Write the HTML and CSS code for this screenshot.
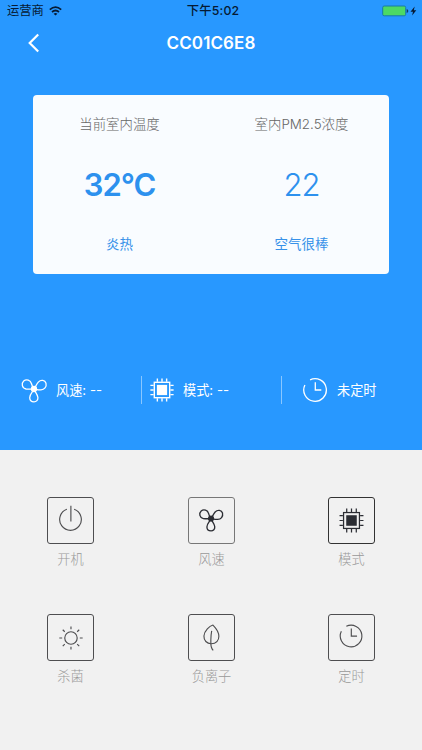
FILE: index.html
```
<!DOCTYPE html>
<html lang="zh-CN">
<head>
<meta charset="utf-8">
<title>CC01C6E8</title>
<link rel="stylesheet" href="styles.css">
</head>
<body>
<svg class="defs" width="0" height="0">
  <defs>
    <g id="fan" fill="none" stroke="currentColor">
      <path d="M0 0C-3 .3-5.500 .3-8 0C-12-.8-12.900-5.500-10.300-8C-7.500-10.200-3.500-8.800-2.600-5.500C-2-3.300-1.300-1.500 0 0Z"/>
      <path d="M0 0C1.500-1.800 2.200-4.500 4.300-6.900C7-9.600 11-8.900 12-5.800C12.900-2 10.200 .8 7 .9C4 1 2 .3 0 0Z"/>
      <path d="M0 0C-.8 2.500-4.300 5-4.300 8.800C-4.200 11.500-2.200 12.900 0 12.900C2.400 12.900 4.100 11 3.900 8.500C3.600 5 .8 2.800 0 0Z"/>
      <circle r="2.500" fill="currentColor"/>
    </g>
    <g id="chip" fill="none" stroke="currentColor">
      <rect x="-8.300" y="-8.300" width="16.600" height="16.600"/>
      <rect x="-5.500" y="-5.500" width="11" height="11" fill="currentColor" stroke="none"/>
      <path d="M-5-9V-12.500M0-9V-12.500M5-9V-12.500M-5 9V12.500M0 9V12.500M5 9V12.500M-9-5H-12.500M-9 0H-12.500M-9 5H-12.500M9-5H12.500M9 0H12.500M9 5H12.500"/>
    </g>
    <g id="clock" fill="none" stroke="currentColor">
      <path d="M-4.900-10.200A11.300 11.300 0 1 1-10.100-5"/>
      <path d="M.3-7.800V0H6.300"/>
    </g>
  </defs>
</svg>
<div class="screen">
  <section class="hero">
    <div class="status-bar">
      <div class="carrier">运营商
        <svg width="13" height="10" viewBox="0 0 13 10" fill="none" stroke="#061a33" stroke-width="1.700">
          <path d="M.8 3.600Q6.500-1.500 12.200 3.600M3 6Q6.500 3 10 6"/>
          <path d="M6.500 9.600L4.600 7.700Q6.500 6.300 8.400 7.700Z" fill="#061a33" stroke="none"/>
        </svg>
      </div>
      <div class="time">下午5:02</div>
      <svg class="battery" width="36" height="12" viewBox="0 0 36 12">
        <rect x=".7" y="1" width="23" height="9.800" rx="1.500" fill="#4cd964" stroke="#197aa5"/>
        <path d="M24.700 4v4q1.600-.4 1.600-2t-1.600-2Z" fill="#123a62"/>
        <path d="M32.700 1.500L28.500 6.700H31L30.100 10.600L34.300 5.300H31.800Z" fill="#061a33"/>
      </svg>
    </div>
    <div class="nav-bar">
      <svg class="back" width="12" height="20" viewBox="0 0 12 20" fill="none" stroke="#fff" stroke-width="2.200"><path d="M10.200 1.500L1.700 10L10.200 18.500"/></svg>
      <div class="title">CC01C6E8</div>
    </div>
    <div class="card">
      <div class="reading">
        <div class="reading-label">当前室内温度</div>
        <div class="reading-value strong">32°C</div>
        <div class="reading-note">炎热</div>
      </div>
      <div class="reading">
        <div class="reading-label">室内PM2.5浓度</div>
        <div class="reading-value">22</div>
        <div class="reading-note">空气很棒</div>
      </div>
    </div>
    <div class="states">
      <div class="state first">
        <svg width="28" height="28" viewBox="-14 -13 28 28" stroke-width="1.300"><use href="#fan"/></svg>
        <span>风速: --</span>
      </div>
      <div class="state second">
        <svg width="26" height="26" viewBox="-14 -14 28 28" stroke-width="1.500"><use href="#chip"/></svg>
        <span>模式: --</span>
      </div>
      <div class="state third">
        <svg width="26" height="26" viewBox="-13 -13 26 26" stroke-width="1.300"><use href="#clock"/></svg>
        <span>未定时</span>
      </div>
    </div>
  </section>
  <section class="controls">
    <div class="control">
      <svg viewBox="-23.500 -22.500 47 47" stroke-width="1.200"><g fill="none" stroke="currentColor"><path d="M-3.800-10.700A11.300 11.300 0 1 0 3.800-10.700M.4-14.500V2"/></g></svg>
      <span>开机</span>
    </div>
    <div class="control thin">
      <svg viewBox="-23 -21.500 47 47" stroke-width="1.400"><use href="#fan"/></svg>
      <span>风速</span>
    </div>
    <div class="control dark">
      <svg viewBox="-23.500 -23.500 47 47" stroke-width="1.300"><use href="#chip"/></svg>
      <span>模式</span>
    </div>
    <div class="control">
      <svg viewBox="-24 -24 47 47" stroke-width="1.200"><g fill="none" stroke="currentColor"><circle r="6.500"/><path d="M0-9.200V-12M0 9.200V12M-9.200 0H-12.200M9.200 0H12.200M-6.500-6.500L-8.600-8.600M6.500-6.500L8.600-8.600M-6.500 6.500L-8.600 8.600M6.500 6.500L8.600 8.600"/></g></svg>
      <span>杀菌</span>
    </div>
    <div class="control">
      <svg viewBox="-23.500 -23.500 47 47" stroke-width="1.200"><g fill="none" stroke="currentColor"><path d="M1.500-13C-2-12-7.500-7-7.900-1.500C-8.100 3-5 6.500-.3 6.500C5 6.500 7.700 3 7.700-1.200C7.700-5.500 4.500-10 1.500-13Z"/><path d="M.2-7C-.8-2-1.100 8 0 10.500Q.6 12.300 1.800 13.500"/></g></svg>
      <span>负离子</span>
    </div>
    <div class="control">
      <svg viewBox="-23 -22 47 47" stroke-width="1.200"><use href="#clock"/></svg>
      <span>定时</span>
    </div>
  </section>
</div>
</body>
</html>
```
FILE: styles.css
```
* { box-sizing: border-box; }
body {
  margin: 0;
  background: #f1f1f1;
  font-family: Inter, "Noto Sans CJK SC", sans-serif;
}
.defs { display: block; position: absolute; }
.screen { width: 422px; height: 750px; overflow: hidden; }
.hero { height: 450px; background: #2898ff; color: #fff; }
.status-bar {
  display: grid;
  grid-template-columns: 1fr auto 1fr;
  align-items: center;
  height: 22px;
  padding: 0 4px 0 7px;
  color: #061a33;
  font-size: 12.300px;
  line-height: 22px;
}
.carrier { display: flex; align-items: center; gap: 5px; }
.time { font-weight: 500; letter-spacing: .2px; padding-left: 1px; }
.battery { justify-self: end; }
.nav-bar {
  display: grid;
  grid-template-columns: 28px 1fr 28px;
  align-items: center;
  height: 42px;
  padding: 0 28px;
}
.title { text-align: center; font-size: 17px; font-weight: 600; letter-spacing: .1px; }
.card {
  display: grid;
  grid-template-columns: 173px 191px;
  width: 356px;
  height: 179px;
  margin: 30.500px 0 0 33px;
  border-radius: 4px;
  background: #f9fcff;
}
.reading { text-align: center; white-space: nowrap; }
.reading-label { margin-top: 19px; height: 20px; line-height: 20px; font-size: 13.400px; font-weight: 300; color: #666; }
.reading-value { margin-top: 30px; height: 42px; line-height: 42px; font-size: 31px; letter-spacing: -1px; color: #2d91ee; font-weight: 300; }
.strong { font-weight: 600; }
.reading-note { margin-top: 28px; height: 20px; line-height: 20px; font-size: 13.500px; color: #3792e9; }
.states {
  display: grid;
  grid-template-columns: 141px 140px 141px;
  height: 26px;
  margin-top: 102.500px;
  line-height: 26px;
  font-size: 13.200px;
}
.state { display: flex; align-items: center; border-left: 1px solid #8ac7ff; }
.state span { white-space: nowrap; }
.first { padding-left: 20px; gap: 8px; border-left: 0; }
.second { padding-left: 7px; gap: 8px; }
.third { padding-left: 20px; gap: 9px; }
.controls {
  display: grid;
  grid-template-columns: 141px 140px 141px;
  grid-auto-rows: 117px;
  padding-top: 47px;
  color: #4e4e50;
}
.control { display: flex; flex-direction: column; align-items: center; }
.control svg { width: 47px; height: 47px; border: 1px solid #4e4e50; border-radius: 3px; }
.control:nth-child(3n + 2) { padding-left: 1px; }
.control span { margin-top: 5px; line-height: 20px; font-size: 13.200px; font-weight: 300; color: #999; }
.thin svg, .dark svg { color: #2b2d33; }
.thin svg { border-color: #777; }
.dark svg { border-color: #333; }
```
